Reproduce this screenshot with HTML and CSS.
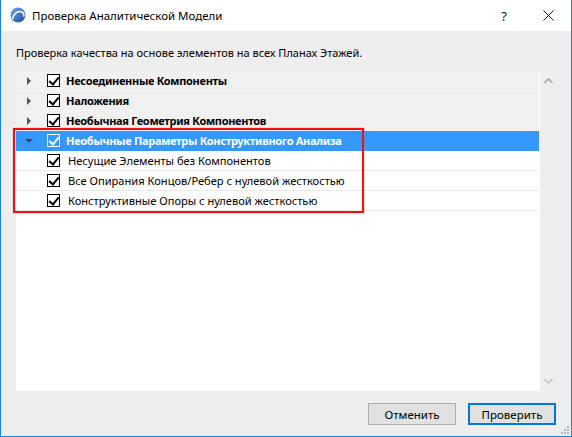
FILE: index.html
```html
<!DOCTYPE html>
<html lang="ru">
<head>
<meta charset="utf-8">
<link rel="stylesheet" href="styles.css">
</head>
<body>
<div class="window">
  <div class="titlebar">
    <svg class="app-icon" width="16" height="16" viewBox="0 0 16 16">
      <defs>
        <linearGradient id="g" x1="0" y1="0" x2="1" y2="1">
          <stop offset="0" stop-color="#6aa6ea"/>
          <stop offset="1" stop-color="#1f4f9c"/>
        </linearGradient>
      </defs>
      <circle cx="8" cy="8" r="7.5" fill="url(#g)"/>
      <path d="M2.5 12 C4 6 8 3.5 12 5 C13.5 5.8 14 7.5 13.8 9.5" fill="none" stroke="#fff" stroke-width="1.6"/>
    </svg>
    <span class="title">Проверка Аналитической Модели</span>
    <span class="tb-btn help">?</span>
    <span class="tb-btn close">
      <svg width="11" height="11" viewBox="0 0 11 11"><path d="M0.5 0.5 L10.5 10.5 M10.5 0.5 L0.5 10.5" stroke="#111" stroke-width="1"/></svg>
    </span>
  </div>
  <div class="body">
    <div class="desc">Проверка качества на основе элементов на всех Планах Этажей.</div>
    <div class="listbox">
      <div class="rows">
        <div class="row parent">
          <span class="exp right"></span><span class="cb"></span><span class="label">Несоединенные Компоненты</span>
        </div>
        <div class="row parent">
          <span class="exp right"></span><span class="cb"></span><span class="label">Наложения</span>
        </div>
        <div class="row parent">
          <span class="exp right"></span><span class="cb"></span><span class="label">Необычная Геометрия Компонентов</span>
        </div>
        <div class="row parent selected">
          <span class="exp down"></span><span class="cb"></span><span class="label">Необычные Параметры Конструктивного Анализа</span>
        </div>
        <div class="row child">
          <span class="exp"></span><span class="cb"></span><span class="label">Несущие Элементы без Компонентов</span>
        </div>
        <div class="row child">
          <span class="exp"></span><span class="cb"></span><span class="label">Все Опирания Концов/Ребер с нулевой жесткостью</span>
        </div>
        <div class="row child">
          <span class="exp"></span><span class="cb"></span><span class="label">Конструктивные Опоры с нулевой жесткостью</span>
        </div>
        <div class="highlight"></div>
      </div>
      <div class="scrollbar">
        <svg width="9" height="6" viewBox="0 0 9 6"><path d="M0.5 5 L4.5 1 L8.5 5" fill="none" stroke="#a6a6a6" stroke-width="1.6"/></svg>
        <svg width="9" height="6" viewBox="0 0 9 6"><path d="M0.5 1 L4.5 5 L8.5 1" fill="none" stroke="#c4c4c4" stroke-width="1.6"/></svg>
      </div>
    </div>
    <div class="buttons">
      <button class="btn">Отменить</button>
      <button class="btn default">Проверить</button>
    </div>
  </div>
  <svg class="grip" width="10" height="10" viewBox="0 0 10 10">
    <rect x="8" y="2" width="2" height="2" fill="#b5b5b5"/>
    <rect x="5" y="5" width="2" height="2" fill="#b5b5b5"/>
    <rect x="8" y="5" width="2" height="2" fill="#b5b5b5"/>
    <rect x="2" y="8" width="2" height="2" fill="#b5b5b5"/>
    <rect x="5" y="8" width="2" height="2" fill="#b5b5b5"/>
    <rect x="8" y="8" width="2" height="2" fill="#b5b5b5"/>
  </svg>
</div>
</body>
</html>
```

FILE: styles.css
```css
* { box-sizing: border-box; }
html, body { margin: 0; padding: 0; }
body {
  font-family: "Noto Sans", "Open Sans", "Liberation Sans", sans-serif;
  font-size: 12px;
  color: #000;
  background: #fff;
}
.window {
  position: relative;
  width: 572px;
  height: 437px;
  border: 1px solid #1883d7;
  border-top: none;
  background: #eeeeee;
  display: flex;
  flex-direction: column;
}
.titlebar {
  height: 31px;
  background: #fff;
  display: flex;
  align-items: center;
  padding-left: 9px;
}
.app-icon { flex: none; margin-top: -1px; }
.title {
  margin-left: 6px;
  font-size: 11.5px;
  flex: 1;
}
.tb-btn {
  display: flex;
  align-items: center;
  justify-content: center;
}
.help { width: 20px; font-size: 13px; margin-right: 27px; color: #111; }
.close { width: 14px; margin-right: 16px; }
.body {
  flex: 1;
  display: flex;
  flex-direction: column;
  padding: 0 14px 0 15px;
}
.desc {
  height: 40px;
  line-height: 44px;
  font-size: 11px;
  white-space: nowrap;
}
.listbox {
  height: 320px;
  background: #fff;
  display: flex;
}
.rows {
  position: relative;
  flex: 1;
  margin-right: 1px;
  background: #fff;
}
.row {
  height: 20px;
  display: flex;
  align-items: center;
  border-bottom: 1px solid #e9e9e9;
  white-space: nowrap;
}
.row.parent {
  background: #f0f0f0;
  border-bottom-color: #f5f5f5;
}
.row.parent .label {
  font-weight: bold;
  font-size: 11px;
  letter-spacing: -0.3px;
}
.row.selected {
  background: #3399ff;
  border-bottom-color: #3399ff;
  color: #fff;
}
.exp {
  width: 31px;
  height: 20px;
  flex: none;
  position: relative;
}
.exp.right::after {
  content: "";
  position: absolute;
  left: 11px;
  top: 6px;
  border-left: 4px solid #555;
  border-top: 4px solid transparent;
  border-bottom: 4px solid transparent;
}
.exp.down::after {
  content: "";
  position: absolute;
  left: 9px;
  top: 8px;
  border-top: 4px solid #3c4a5a;
  border-left: 4px solid transparent;
  border-right: 4px solid transparent;
}
.cb {
  width: 13px;
  height: 13px;
  flex: none;
  border: 1px solid #000;
  background: #fff;
  position: relative;
  margin-right: 6px;
}
.cb::after {
  content: "";
  position: absolute;
  left: 3px;
  top: 0px;
  width: 4px;
  height: 8px;
  border-right: 2px solid #000;
  border-bottom: 2px solid #000;
  transform: rotate(40deg);
}
.selected .cb { border-color: #fff; background: transparent; }
.selected .cb::after { border-color: #fff; }
.child .label { margin-left: 2px; font-size: 11.1px; }
.highlight {
  position: absolute;
  left: -3px;
  top: 57px;
  width: 351px;
  height: 85px;
  border: 2px solid #f01010;
  box-shadow: 0 0 1px #ff6060;
}
.scrollbar {
  width: 17px;
  background: #eeeeee;
  display: flex;
  flex-direction: column;
  justify-content: space-between;
  align-items: center;
  padding: 7px 0 7px 0;
}
.buttons {
  display: flex;
  justify-content: flex-end;
  gap: 12px;
  margin-top: 12px;
  padding-right: 1px;
}
.btn {
  width: 88px;
  height: 22px;
  font-family: inherit;
  font-size: 11.5px;
  background: #e1e1e1;
  border: 1px solid #adadad;
  color: #000;
  padding: 0;
}
.btn.default { border: 2px solid #0078d7; }
.grip { position: absolute; right: 2px; bottom: 2px; }
```
